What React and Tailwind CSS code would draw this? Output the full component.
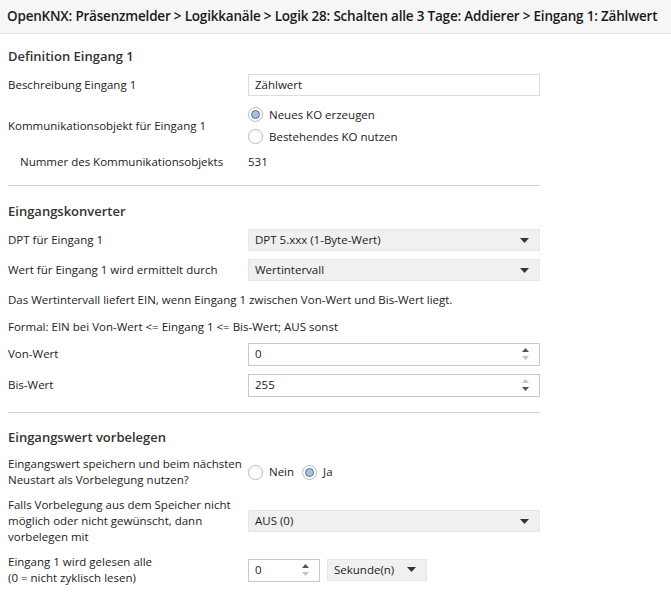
const font = { fontFamily: '"Open Sans", "Noto Sans", sans-serif' }

function Radio({ checked, label }) {
  return (
    <label className="flex items-center gap-[6px]">
      <span className="w-[15px] h-[15px] rounded-full border border-[#b8b8b8] bg-white flex items-center justify-center">
        {checked && <span className="w-[9px] h-[9px] rounded-full bg-[#a9bedb] border border-[#4d6f9c]" />}
      </span>
      <span>{label}</span>
    </label>
  )
}

function Select({ value, className = 'w-[292px]' }) {
  return (
    <div className={`${className} h-[22px] bg-[#f0f0f0] border border-[#e6e6e6] flex items-center justify-between pl-[6px] pr-[10px]`}>
      <span>{value}</span>
      <svg width="9" height="5" viewBox="0 0 9 5"><path d="M0 0h9L4.5 5z" fill="#333" /></svg>
    </div>
  )
}

function Spin({ value, upDim, downDim, className = 'w-[292px]' }) {
  return (
    <div className={`${className} h-[23px] bg-white border border-[#c8c8c8] flex items-center justify-between pl-[6px] pr-[10px]`}>
      <span>{value}</span>
      <div className="flex flex-col gap-[4px]">
        <svg width="7" height="4" viewBox="0 0 7 4"><path d="M0 4h7L3.5 0z" fill={upDim ? '#c4c4c4' : '#555'} /></svg>
        <svg width="7" height="4" viewBox="0 0 7 4"><path d="M0 0h7L3.5 4z" fill={downDim ? '#c4c4c4' : '#555'} /></svg>
      </div>
    </div>
  )
}

function Row({ label, children, className = 'h-[30px]' }) {
  return (
    <div className={`flex items-center ${className}`}>
      <div className="w-[240px] shrink-0 leading-[16px] whitespace-nowrap">{label}</div>
      <div className="flex-1">{children}</div>
    </div>
  )
}

function Heading({ children }) {
  return <div className="text-[13px] font-semibold text-[#333] h-[26px] flex items-center">{children}</div>
}

export default function App() {
  return (
    <div className="w-[671px] h-[592px] bg-white text-[11.5px] text-[#222] overflow-hidden" style={font}>
      <div className="h-[34px] bg-[#f6f6f6] border-b border-[#e3e3e3] flex items-center px-[7px] text-[13.5px] font-semibold text-[#1a1a1a] tracking-[-0.2px] whitespace-nowrap">
        OpenKNX: Präsenzmelder &gt; Logikkanäle &gt; Logik 28: Schalten alle 3 Tage: Addierer &gt; Eingang 1: Zählwert
      </div>
      <div className="pl-[8px] w-[540px]">
        <div className="pt-[10px]">
          <Heading>Definition Eingang 1</Heading>
          <Row label="Beschreibung Eingang 1">
            <div className="w-[292px] h-[22px] border border-[#dcdcdc] flex items-center px-[6px]">Zählwert</div>
          </Row>
          <Row label="Kommunikationsobjekt für Eingang 1" className="h-[51px]">
            <div className="flex flex-col gap-[4px]">
              <Radio checked label="Neues KO erzeugen" />
              <Radio label="Bestehendes KO nutzen" />
            </div>
          </Row>
          <Row label={<span className="pl-[12px]">Nummer des Kommunikationsobjekts</span>} className="h-[22px]">531</Row>
        </div>
        <div className="border-t border-[#d2d2d2] mt-[12px] pt-[13px]">
          <Heading>Eingangskonverter</Heading>
          <Row label="DPT für Eingang 1"><Select value="DPT 5.xxx (1-Byte-Wert)" /></Row>
          <Row label="Wert für Eingang 1 wird ermittelt durch"><Select value="Wertintervall" /></Row>
          <div className="h-[29px] flex items-center">Das Wertintervall liefert EIN, wenn Eingang 1 zwischen Von-Wert und Bis-Wert liegt.</div>
          <div className="h-[25px] flex items-center">Formal: EIN bei Von-Wert &lt;= Eingang 1 &lt;= Bis-Wert; AUS sonst</div>
          <Row label="Von-Wert"><Spin value="0" downDim /></Row>
          <Row label="Bis-Wert" className="h-[32px]"><Spin value="255" upDim /></Row>
        </div>
        <div className="border-t border-[#d2d2d2] mt-[11px] pt-[12px]">
          <Heading>Eingangswert vorbelegen</Heading>
          <Row label={<>Eingangswert speichern und beim nächsten<br />Neustart als Vorbelegung nutzen?</>} className="h-[42px]">
            <div className="flex gap-[8px]">
              <Radio label="Nein" />
              <Radio checked label="Ja" />
            </div>
          </Row>
          <Row label={<>Falls Vorbelegung aus dem Speicher nicht<br />möglich oder nicht gewünscht, dann<br />vorbelegen mit</>} className="h-[56px]">
            <Select value="AUS (0)" />
          </Row>
          <Row label={<>Eingang 1 wird gelesen alle<br />(0 = nicht zyklisch lesen)</>} className="h-[42px]">
            <div className="flex gap-[7px]">
              <Spin value="0" downDim className="w-[72px]" />
              <Select value="Sekunde(n)" className="w-[100px]" />
            </div>
          </Row>
        </div>
      </div>
    </div>
  )
}
